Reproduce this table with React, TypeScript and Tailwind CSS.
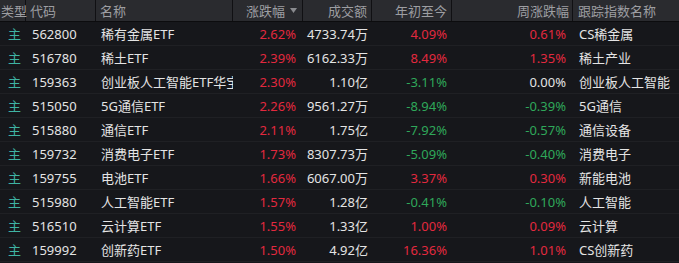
import React from "react";

type Row = {
  code: string;
  name: string;
  chg: string;
  amt: string;
  ytd: string;
  wk: string;
  idx: string;
};

const rows: Row[] = [
  { code: "562800", name: "稀有金属ETF", chg: "2.62%", amt: "4733.74万", ytd: "4.09%", wk: "0.61%", idx: "CS稀金属" },
  { code: "516780", name: "稀土ETF", chg: "2.39%", amt: "6162.33万", ytd: "8.49%", wk: "1.35%", idx: "稀土产业" },
  { code: "159363", name: "创业板人工智能ETF华宝", chg: "2.30%", amt: "1.10亿", ytd: "-3.11%", wk: "0.00%", idx: "创业板人工智能" },
  { code: "515050", name: "5G通信ETF", chg: "2.26%", amt: "9561.27万", ytd: "-8.94%", wk: "-0.39%", idx: "5G通信" },
  { code: "515880", name: "通信ETF", chg: "2.11%", amt: "1.75亿", ytd: "-7.92%", wk: "-0.57%", idx: "通信设备" },
  { code: "159732", name: "消费电子ETF", chg: "1.73%", amt: "8307.73万", ytd: "-5.09%", wk: "-0.40%", idx: "消费电子" },
  { code: "159755", name: "电池ETF", chg: "1.66%", amt: "6067.00万", ytd: "3.37%", wk: "0.30%", idx: "新能电池" },
  { code: "515980", name: "人工智能ETF", chg: "1.57%", amt: "1.28亿", ytd: "-0.41%", wk: "-0.10%", idx: "人工智能" },
  { code: "516510", name: "云计算ETF", chg: "1.55%", amt: "1.33亿", ytd: "1.00%", wk: "0.09%", idx: "云计算" },
  { code: "159992", name: "创新药ETF", chg: "1.50%", amt: "4.92亿", ytd: "16.36%", wk: "1.01%", idx: "CS创新药" },
];

const color = (v: string) => {
  if (v.startsWith("-")) return "text-[#2fa85a]";
  if (/^0\.00/.test(v)) return "text-[#e4e4e4]";
  return "text-[#e3293f]";
};

export default function App() {
  return (
    <div
      className="w-[679px] h-[263px] overflow-hidden bg-[#16171b] text-[13px] leading-[18px]"
      style={{ fontFamily: '"Noto Sans", "Noto Sans CJK SC", sans-serif' }}
    >
      <div className="flex h-[22px] bg-[#2a2b2f] border-b border-[#0c0c0e] text-[#9d9ea2] items-stretch whitespace-nowrap">
        <div className="w-[26px] border-r border-[#101013] flex items-center pl-[1px]">类型</div>
        <div className="w-[70px] border-r border-[#101013] flex items-center pl-[4px]">代码</div>
        <div className="w-[137px] border-r border-[#101013] flex items-center pl-[4px]">名称</div>
        <div className="w-[70px] border-r border-[#101013] flex items-center justify-end pr-[5px] gap-[5px]">
          <span>涨跌幅</span>
          <svg width="7" height="5" viewBox="0 0 7 5"><path d="M0 0h7L3.5 5z" fill="#8a8b8f" /></svg>
        </div>
        <div className="w-[69px] border-r border-[#101013] flex items-center justify-end pr-[4px]">成交额</div>
        <div className="w-[80px] border-r border-[#101013] flex items-center justify-end pr-[4px]">年初至今</div>
        <div className="w-[121px] border-r border-[#101013] flex items-center justify-end pr-[3px]">周涨跌幅</div>
        <div className="flex-1 flex items-center pl-[5px]">跟踪指数名称</div>
      </div>
      {rows.map((r) => (
        <div key={r.code} className="flex h-[24px] items-center border-b border-[#1f2024] whitespace-nowrap">
          <div className="w-[26px] pl-[8px] text-[#3fb3a3]">主</div>
          <div className="w-[70px] pl-[6px] text-[#e4e4e4]">{r.code}</div>
          <div className="w-[137px] pl-[5px] text-[#e4e4e4] overflow-x-clip">{r.name}</div>
          <div className={`w-[70px] text-right pr-[7px] ${color(r.chg)}`}>{r.chg}</div>
          <div className="w-[69px] text-right pr-[4px] text-[#e4e4e4]">{r.amt}</div>
          <div className={`w-[80px] text-right pr-[5px] ${color(r.ytd)}`}>{r.ytd}</div>
          <div className={`w-[121px] text-right pr-[7px] ${color(r.wk)}`}>{r.wk}</div>
          <div className="flex-1 pl-[6px] text-[#e4e4e4]">{r.idx}</div>
        </div>
      ))}
    </div>
  );
}
